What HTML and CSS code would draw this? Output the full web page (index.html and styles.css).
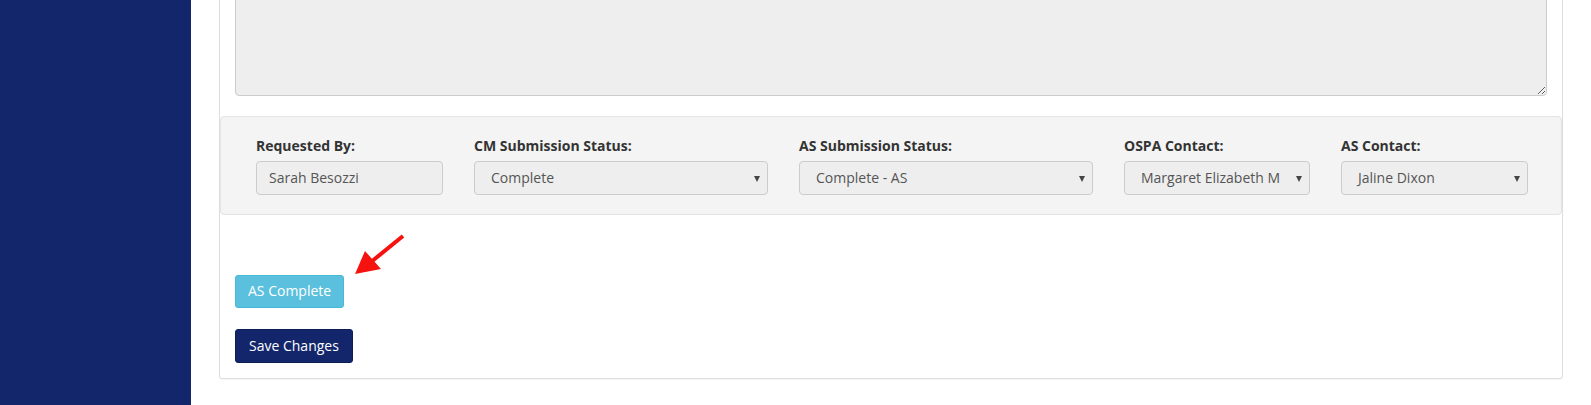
FILE: index.html
```html
<!DOCTYPE html>
<html lang="en">
<head>
<meta charset="utf-8">
<title>Request</title>
<link rel="stylesheet" href="styles.css">
</head>
<body>
<div class="layout">
  <aside class="sidebar"></aside>
  <main class="main">
    <section class="card">
      <div class="notes">
        <textarea class="notes-area" disabled></textarea>
      </div>
      <div class="well">
        <div class="field f-sm">
          <label class="lbl">Requested By:</label>
          <div class="ctrl">Sarah Besozzi</div>
        </div>
        <div class="field f-lg">
          <label class="lbl">CM Submission Status:</label>
          <div class="ctrl sel">Complete<span class="caret"></span></div>
        </div>
        <div class="field f-lg">
          <label class="lbl">AS Submission Status:</label>
          <div class="ctrl sel">Complete - AS<span class="caret"></span></div>
        </div>
        <div class="field f-xs">
          <label class="lbl">OSPA Contact:</label>
          <div class="ctrl sel"><span class="clip">Margaret Elizabeth M</span><span class="caret"></span></div>
        </div>
        <div class="field f-sm">
          <label class="lbl">AS Contact:</label>
          <div class="ctrl sel">Jaline Dixon<span class="caret"></span></div>
        </div>
      </div>
      <div class="actions">
        <div class="btn-wrap">
          <button class="btn btn-info">AS Complete</button>
          <svg class="pointer" width="62" height="50" viewBox="0 0 62 50">
            <line x1="56" y1="6" x2="24" y2="32" stroke="#f5120f" stroke-width="4"/>
            <polygon points="8,44 18,21 34,39" fill="#f5120f"/>
          </svg>
        </div>
        <button class="btn btn-navy">Save Changes</button>
      </div>
    </section>
  </main>
</div>
</body>
</html>
```
FILE: styles.css
```css
html, body {
  margin: 0;
  padding: 0;
  height: 100%;
  overflow: hidden;
  background: #fff;
}
body {
  font-family: "Open Sans", "Noto Sans", sans-serif;
  font-size: 14px;
  color: #333;
}
.layout {
  display: flex;
  height: 405px;
}
.sidebar {
  width: 191px;
  flex: 0 0 191px;
  background: #13266b;
}
.main {
  flex: 1;
  padding-left: 28px;
}
.card {
  width: 1342px;
  margin-top: -40px;
  border: 1px solid #dedede;
  border-radius: 0 0 3px 3px;
  box-shadow: 0 1px 1px rgba(0,0,0,0.04);
  background: #fff;
  padding: 15px 0 15px 0;
}
.notes {
  padding: 0 15px;
}
.notes-area {
  display: block;
  box-sizing: border-box;
  width: 100%;
  height: 120px;
  margin: 0;
  background: #eeeeee;
  border: 1px solid #cccccc;
  border-radius: 4px;
  resize: vertical;
  font-family: inherit;
}
.well {
  margin-top: 20px;
  background: #f4f4f4;
  border: 1px solid #e3e3e3;
  border-radius: 4px;
  padding: 19px 0 19px 35px;
  display: flex;
  gap: 31px;
}
.f-sm { width: 187px; }
.f-xs { width: 186px; }
.f-lg { width: 294px; }
.lbl {
  display: block;
  font-weight: 700;
  line-height: 20px;
  margin-bottom: 5px;
  white-space: nowrap;
}
.ctrl {
  box-sizing: border-box;
  height: 34px;
  line-height: 32px;
  background: #eeeeee;
  border: 1px solid #cccccc;
  border-radius: 4px;
  padding: 0 12px;
  color: #555;
  white-space: nowrap;
  overflow: hidden;
}
.sel {
  position: relative;
  padding-left: 16px;
  padding-right: 28px;
}
.clip {
  display: block;
  overflow: hidden;
}
.caret {
  position: absolute;
  right: 7px;
  top: 14px;
  width: 0;
  height: 0;
  border-left: 3.5px solid transparent;
  border-right: 3.5px solid transparent;
  border-top: 6px solid #444;
}
.actions {
  padding: 60px 15px 0 15px;
  display: flex;
  flex-direction: column;
  align-items: flex-start;
  gap: 21px;
}
.btn-wrap {
  position: relative;
}
.btn {
  font-family: inherit;
  font-size: 14px;
  line-height: 20px;
  padding: 6px 12px;
  border-radius: 3px;
  color: #fff;
  cursor: pointer;
}
.btn-info {
  height: 33px;
  padding-top: 5px;
  padding-bottom: 6px;
  background: #5bc0de;
  border: 1px solid #46b8da;
}
.btn-navy {
  height: 34px;
  padding-left: 13px;
  padding-right: 13px;
  background: #13266b;
  border: 1px solid #0e1d55;
}
.pointer {
  position: absolute;
  left: 112px;
  top: -45px;
}
```
